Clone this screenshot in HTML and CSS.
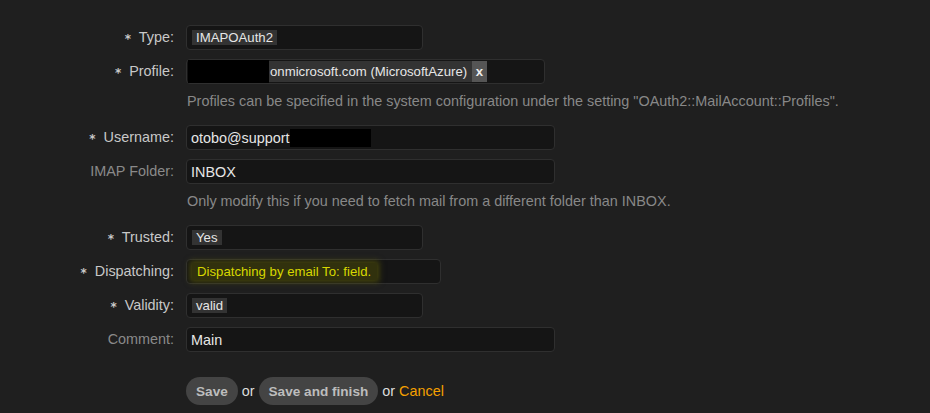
FILE: index.html
```html
<!DOCTYPE html>
<html lang="en">
<head>
  <meta charset="UTF-8" />
  <title>Mail Account</title>
  <link rel="stylesheet" href="styles.css">
</head>
<body>

  <!-- Mail account form -->
  <form class="account-form">
    <div class="row">
      <label class="label required"><span class="star">*</span> Type:</label>
      <div class="field">
        <div class="box small"><span class="chip">IMAPOAuth2</span></div>
      </div>
    </div>

    <div class="row">
      <label class="label required"><span class="star">*</span> Profile:</label>
      <div class="field">
        <div class="box medium">
          <span class="redact wide"></span><span class="token">onmicrosoft.com (MicrosoftAzure) <span class="remove">x</span></span>
        </div>
        <p class="hint">Profiles can be specified in the system configuration under the setting "OAuth2::MailAccount::Profiles".</p>
      </div>
    </div>

    <div class="row">
      <label class="label required"><span class="star">*</span> Username:</label>
      <div class="field">
        <div class="box large text">otobo@support<span class="redact short"></span></div>
      </div>
    </div>

    <div class="row">
      <label class="label">IMAP Folder:</label>
      <div class="field">
        <div class="box large text">INBOX</div>
        <p class="hint">Only modify this if you need to fetch mail from a different folder than INBOX.</p>
      </div>
    </div>

    <div class="row">
      <label class="label required"><span class="star">*</span> Trusted:</label>
      <div class="field">
        <div class="box small"><span class="chip">Yes</span></div>
      </div>
    </div>

    <div class="row">
      <label class="label required"><span class="star">*</span> Dispatching:</label>
      <div class="field">
        <div class="box dispatch"><span class="chip glow">Dispatching by email To: field.</span></div>
      </div>
    </div>

    <div class="row">
      <label class="label required"><span class="star">*</span> Validity:</label>
      <div class="field">
        <div class="box small"><span class="chip">valid</span></div>
      </div>
    </div>

    <div class="row">
      <label class="label">Comment:</label>
      <div class="field">
        <div class="box large text">Main</div>
      </div>
    </div>

    <div class="row actions">
      <span class="label"></span>
      <div class="field buttons">
        <button type="button">Save</button> or
        <button type="button">Save and finish</button> or
        <a href="#" class="cancel">Cancel</a>
      </div>
    </div>
  </form>

</body>
</html>
```

FILE: styles.css
```css
body {
  background-color: #1f1f1f;
  color: #ddd;
  font-family: "Liberation Sans", Arial, sans-serif;
  font-size: 14.4px;
  margin: 0;
  padding: 25px 0 0 0;
}

.account-form {
  display: flex;
  flex-direction: column;
  gap: 9px;
}

.row {
  display: flex;
  align-items: flex-start;
  gap: 12px;
}

.label {
  width: 174px;
  height: 25px;
  flex-shrink: 0;
  text-align: right;
  color: #8a8a8a;
  line-height: 25px;
}

.label.required {
  color: #c8c8c8;
}

.star {
  display: inline-block;
  font-family: "DejaVu Sans", sans-serif;
  font-weight: bold;
  font-size: 12px;
  line-height: 12px;
  transform: translateY(1px);
  margin-right: 4px;
}

.field {
  display: flex;
  flex-direction: column;
}

.box {
  box-sizing: border-box;
  height: 25px;
  background-color: #151515;
  border: 1px solid #2f2f2f;
  border-radius: 4px;
  display: flex;
  align-items: center;
  padding: 0 5px;
  color: #e6e6e6;
}

.box.small { width: 237px; }
.box.medium { width: 359px; padding-left: 1px; }
.box.large { width: 369px; }
.box.dispatch { width: 255px; }
.box.text { padding-left: 4px; }

.chip {
  background-color: #333;
  padding: 0 4px;
  font-size: 13.2px;
  line-height: 15px;
}

.chip.glow {
  color: #d8d800;
  background-color: #31310d;
  padding: 0 6px 0 5px;
  line-height: 17px;
  box-shadow: 0 0 6px 2px rgba(120, 120, 0, 0.5);
}

.redact {
  display: inline-block;
  background-color: #000;
}

.redact.wide {
  width: 81px;
  height: 23px;
}

.redact.short {
  width: 81px;
  height: 18px;
  margin-top: 1px;
}

.token {
  background-color: #333;
  font-size: 13.2px;
  line-height: 21px;
  padding-left: 1px;
}

.remove {
  display: inline-block;
  background-color: #555;
  font-weight: bold;
  color: #eee;
  padding: 0 4px;
  margin-left: 1px;
}

.hint {
  margin: 8px 0 6px 1px;
  color: #888;
  line-height: 18px;
}

.actions {
  margin-top: 16px;
}

.buttons {
  flex-direction: row;
  align-items: center;
  gap: 4px;
  color: #ddd;
}

button {
  font-family: "Liberation Sans", Arial, sans-serif;
  font-size: 13.6px;
  font-weight: bold;
  background-color: #444;
  color: #bdbdbd;
  border: none;
  border-radius: 14px;
  height: 28px;
  padding: 0 10px;
  cursor: pointer;
}

.cancel {
  color: #f5a000;
  text-decoration: none;
}
```
